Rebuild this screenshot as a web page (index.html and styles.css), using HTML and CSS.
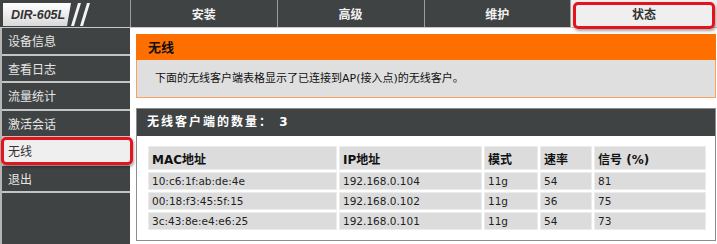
FILE: index.html
```html
<html lang="zh-CN">
  <head>
    <meta charset="UTF-8" />
    <meta name="viewport" content="width=device-width, initial-scale=1.0" />
    <title>DIR-605L 状态 - 无线</title>
    <link rel="stylesheet" href="styles.css">
  </head>
  <body>
    <div class="topbar">
      <div class="logo">
        <svg width="130" height="27" viewBox="0 0 130 27">
          <defs>
            <linearGradient id="logobg" x1="0" y1="0" x2="0" y2="1">
              <stop offset="0" stop-color="#ffffff" />
              <stop offset="1" stop-color="#d9d9d9" />
            </linearGradient>
          </defs>
          <polygon points="3,3 71,3 67,26 3,26" fill="url(#logobg)" />
          <text x="11" y="19" class="logo-text">DIR-605L</text>
          <polygon points="78,3 81,3 74,26 71,26" fill="#f4f4f4" />
          <polygon points="87,3 90,3 83,26 80,26" fill="#f4f4f4" />
        </svg>
      </div>
      <div class="tab">安装</div>
      <div class="tab">高级</div>
      <div class="tab">维护</div>
      <div class="tab active">状态</div>
    </div>

    <div class="main">
      <div class="sidebar">
        <div class="item">设备信息</div>
        <div class="item">查看日志</div>
        <div class="item">流量统计</div>
        <div class="item">激活会话</div>
        <div class="item active">无线</div>
        <div class="item">退出</div>
      </div>

      <div class="content">
        <div class="box orange">
          <div class="box-title">无线</div>
          <div class="box-text">下面的无线客户端表格显示了已连接到AP(接入点)的无线客户。</div>
        </div>

        <div class="box dark">
          <div class="box-title">无线客户端的数量： 3</div>
          <div class="box-body">
            <table class="clients">
              <colgroup>
                <col class="c-mac" />
                <col class="c-ip" />
                <col class="c-mode" />
                <col class="c-rate" />
                <col class="c-signal" />
              </colgroup>
              <tr class="head">
                <td>MAC地址</td>
                <td>IP地址</td>
                <td>模式</td>
                <td>速率</td>
                <td>信号 (%)</td>
              </tr>
              <tr>
                <td>10:c6:1f:ab:de:4e</td>
                <td>192.168.0.104</td>
                <td>11g</td>
                <td>54</td>
                <td>81</td>
              </tr>
              <tr>
                <td>00:18:f3:45:5f:15</td>
                <td>192.168.0.102</td>
                <td>11g</td>
                <td>36</td>
                <td>75</td>
              </tr>
              <tr>
                <td>3c:43:8e:e4:e6:25</td>
                <td>192.168.0.101</td>
                <td>11g</td>
                <td>54</td>
                <td>73</td>
              </tr>
            </table>
          </div>
        </div>
      </div>
    </div>
  </body>
</html>
```

FILE: styles.css
```css
body {
  margin: 0;
  width: 717px;
  height: 244px;
  overflow: hidden;
  background-color: #ffffff;
  font-family: "DejaVu Sans", "Noto Sans CJK SC", sans-serif;
}

/* top navigation */
.topbar {
  display: flex;
  height: 27px;
  background-color: #404344;
  border-bottom: 1px solid #c9c9c9;
}
.logo {
  width: 130px;
  height: 27px;
  border-right: 1px solid #9c9c9c;
}
.logo svg {
  display: block;
}
.logo-text {
  font-family: "Liberation Sans", sans-serif;
  font-size: 12.5px;
  font-weight: bold;
  font-style: italic;
  fill: #333333;
}
.tab {
  flex: 1;
  position: relative;
  border-right: 1px solid #9c9c9c;
  color: #f2f2f2;
  font-family: "Noto Sans CJK SC", sans-serif;
  font-size: 12px;
  font-weight: bold;
  line-height: 27px;
  text-align: center;
}
.tab:last-child {
  border-right: none;
}
.tab.active {
  background-color: #efefef;
  color: #333333;
}
.tab.active::after {
  content: "";
  position: absolute;
  top: 2px;
  left: 2px;
  right: 2px;
  bottom: -2px;
  border: 3px solid #e5141c;
  border-radius: 5px;
  box-shadow: 1px 2px 3px rgba(0, 0, 0, 0.35);
}

/* left menu */
.main {
  display: flex;
  height: 216px;
}
.sidebar {
  width: 128px;
  border-left: 2px solid #b5b5b5;
  background-color: #404344;
}
.item {
  position: relative;
  height: 25.5px;
  line-height: 25.5px;
  padding-left: 6px;
  border-bottom: 2px solid #c4c4c4;
  color: #e6e6e6;
  font-family: "Noto Sans CJK SC", sans-serif;
  font-size: 12px;
}
.item.active {
  background-color: #efefef;
  color: #333333;
}
.item.active::after {
  content: "";
  position: absolute;
  top: -1px;
  left: -1px;
  right: -3px;
  bottom: -1px;
  border: 3px solid #e5141c;
  border-radius: 5px;
  box-shadow: 1px 2px 3px rgba(0, 0, 0, 0.35);
}

/* content */
.content {
  flex: 1;
  padding: 6px 1px 0 6px;
}
.orange .box-title {
  height: 26px;
  line-height: 26px;
  padding-left: 12px;
  background-color: #ff6f00;
  color: #111111;
  font-family: "Noto Sans CJK SC", sans-serif;
  font-size: 13px;
  font-weight: bold;
}
.orange .box-text {
  height: 37px;
  line-height: 37px;
  padding-left: 18px;
  background-color: #dfdfdf;
  border: 1px solid #f7a25e;
  border-top: none;
  color: #111111;
  font-size: 11px;
}
.dark {
  margin-top: 10px;
  border: 1px solid #8c8c8c;
}
.dark .box-title {
  height: 27px;
  line-height: 27px;
  padding-left: 10px;
  background-color: #404344;
  color: #ffffff;
  font-family: "DejaVu Sans", "Noto Sans CJK SC", sans-serif;
  font-size: 12px;
  font-weight: bold;
  letter-spacing: 2px;
}
.box-body {
  padding: 8px 7px 8px 9px;
}

/* client table */
.clients {
  width: 562px;
  table-layout: fixed;
  border-collapse: separate;
  border-spacing: 2px;
}
.c-mac {
  width: 189px;
}
.c-ip {
  width: 143px;
}
.c-mode {
  width: 54px;
}
.c-rate {
  width: 52px;
}
.c-signal {
  width: 112px;
}
.clients td {
  height: 18px;
  padding: 0 3px;
  border: 1px solid #ececec;
  background-color: #dcdcdc;
  color: #1e1e1e;
  font-size: 10.5px;
  white-space: nowrap;
}
.clients .head td {
  height: 24px;
  color: #111111;
  font-size: 12px;
  font-weight: bold;
}
```
